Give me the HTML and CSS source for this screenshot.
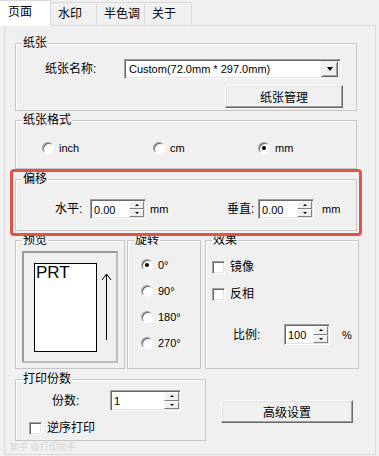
FILE: index.html
```html
<html>
<head>
  <meta charset="UTF-8">
  <link rel="stylesheet" href="styles.css">
</head>
<body>
<div class="dialog">
  <div class="tabs">
    <div class="tab active">页面</div>
    <div class="tab w46">水印</div>
    <div class="tab w48">半色调</div>
    <div class="tab w47">关于</div>
  </div>

  <div class="panel">
    <fieldset class="group paper">
      <legend>纸张</legend>
      <div class="row first">
        <span class="label name-label">纸张名称:</span>
        <div class="combo">
          <span class="combo-text">Custom(72.0mm * 297.0mm)</span>
          <span class="drop"><i class="tri-down"></i></span>
        </div>
      </div>
      <button class="btn manage">纸张管理</button>
    </fieldset>

    <fieldset class="group format">
      <legend>纸张格式</legend>
      <div class="row radios">
        <label class="opt w111"><span class="radio"></span>inch</label>
        <label class="opt w105"><span class="radio"></span>cm</label>
        <label class="opt"><span class="radio on"></span>mm</label>
      </div>
    </fieldset>

    <div class="mark-wrap">
      <fieldset class="group offset">
        <legend>偏移</legend>
        <div class="row">
          <span class="label h-label">水平:</span>
          <div class="spin w56">
            <span class="spin-text">0.00</span>
            <span class="spin-btns"><span class="sb"><i class="tri-up"></i></span><span class="sb"><i class="tri-dn"></i></span></span>
          </div>
          <span class="unit u1">mm</span>
          <span class="label v-label">垂直:</span>
          <div class="spin w56">
            <span class="spin-text">0.00</span>
            <span class="spin-btns"><span class="sb"><i class="tri-up"></i></span><span class="sb"><i class="tri-dn"></i></span></span>
          </div>
          <span class="unit u2">mm</span>
        </div>
      </fieldset>
      <div class="mark"></div>
    </div>

    <div class="trio">
      <fieldset class="group preview">
        <legend>预览</legend>
        <div class="sheet-well">
          <div class="sheet">PRT</div>
          <svg class="arrow" width="11" height="68" viewBox="0 0 11 68">
            <path d="M5.5 1 V67 M5.5 1 L1 7 M5.5 1 L10 7" stroke="#000" stroke-width="1" fill="none"/>
          </svg>
        </div>
      </fieldset>

      <fieldset class="group rotate">
        <legend>旋转</legend>
        <div class="stack">
          <label class="opt"><span class="radio on"></span>0°</label>
          <label class="opt"><span class="radio"></span>90°</label>
          <label class="opt"><span class="radio"></span>180°</label>
          <label class="opt"><span class="radio"></span>270°</label>
        </div>
      </fieldset>

      <fieldset class="group effect">
        <legend>效果</legend>
        <label class="opt chk-row"><span class="check"></span>镜像</label>
        <label class="opt chk-row second"><span class="check"></span>反相</label>
        <div class="row scale-row">
          <span class="label s-label">比例:</span>
          <div class="spin w46 tall">
            <span class="spin-text">100</span>
            <span class="spin-btns"><span class="sb"><i class="tri-up"></i></span><span class="sb"><i class="tri-dn"></i></span></span>
          </div>
          <span class="unit pct">%</span>
        </div>
      </fieldset>
    </div>

    <div class="bottom">
      <fieldset class="group copies">
        <legend>打印份数</legend>
        <div class="row copies-row">
          <span class="label c-label">份数:</span>
          <div class="spin w71 tall">
            <span class="spin-text">1</span>
            <span class="spin-btns"><span class="sb"><i class="tri-up"></i></span><span class="sb"><i class="tri-dn"></i></span></span>
          </div>
        </div>
        <label class="opt rev-row"><span class="check"></span>逆序打印</label>
      </fieldset>
      <button class="btn advanced">高级设置</button>
    </div>

    <div class="watermark">知乎 @打印助手</div>
  </div>
</div>
</body>
</html>
```

FILE: styles.css
```css
* {
    box-sizing: border-box;
    margin: 0;
    padding: 0;
}

body {
    width: 379px;
    height: 456px;
    overflow: hidden;
    background: #f0f0f0;
    color: #000;
    font-family: "Liberation Sans", "Noto Sans CJK SC", sans-serif;
    font-size: 12px;
    line-height: 16px;
}

/* tabs */
.tabs {
    display: flex;
    align-items: flex-end;
    height: 25px;
}

.tab {
    width: 47px;
    height: 23px;
    padding: 3px 0 0 7px;
    border: 1px solid #d9d9d9;
    border-bottom: 0;
    border-left: 0;
    background: #f0f0f0;
}

.tab.w46 { width: 46px; }
.tab.w48 { width: 48px; }
.tab.w47 { width: 47px; }

.tab.active {
    position: relative;
    z-index: 1;
    width: 51px;
    height: 26px;
    margin-bottom: -1px;
    padding: 3px 0 0 8px;
    background: #fff;
}

/* page panel */
.panel {
    width: 372px;
    height: 430px;
    margin-left: 4px;
    padding: 9px 0 0 10px;
    border: 1px solid #d9d9d9;
    background: #f0f0f0;
}

.group {
    width: 342px;
    padding: 0 6px;
    border: 1px solid #c6c6c6;
    box-shadow: inset 1px 1px 0 #fff;
}

.group legend {
    padding: 0 1px;
    line-height: 16px;
}

.row {
    display: flex;
    align-items: center;
}

.label {
    flex: none;
}

/* paper */
.paper {
    height: 76px;
}

.paper .first {
    margin: 8px 0 0 23px;
}

.name-label {
    width: 79px;
}

.combo {
    display: flex;
    justify-content: space-between;
    align-items: center;
    width: 217px;
    height: 20px;
    padding: 0 1px 0 3px;
    background: #fff;
    border: 1px solid;
    border-color: #a0a0a0 #fff #fff #a0a0a0;
    box-shadow: inset 1px 1px 0 #696969, inset -1px -1px 0 #e3e3e3;
    font-size: 11px;
}

.combo-text {
    padding-left: 1px;
}

.drop {
    display: flex;
    align-items: center;
    justify-content: center;
    width: 17px;
    height: 16px;
    margin-right: 1px;
    background: #f0f0f0;
    border: 1px solid;
    border-color: #e3e3e3 #696969 #696969 #e3e3e3;
    box-shadow: inset 1px 1px 0 #fff, inset -1px -1px 0 #a0a0a0;
}

.tri-down {
    border-left: 3px solid transparent;
    border-right: 3px solid transparent;
    border-top: 4px solid #000;
}

.btn {
    display: block;
    background: #f0f0f0;
    border: 1px solid;
    border-color: #fff #696969 #696969 #fff;
    box-shadow: inset -1px -1px 0 #a0a0a0, inset 1px 1px 0 #e3e3e3;
    font-family: "Liberation Sans", "Noto Sans CJK SC", sans-serif;
    font-size: 12px;
    color: #000;
}

.manage {
    width: 118px;
    height: 23px;
    margin: 6px 0 0 203px;
}

/* format */
.format {
    height: 57px;
    margin-top: 1px;
}

.radios {
    margin: 12px 0 0 20px;
    font-size: 11px;
}

.opt {
    display: flex;
    align-items: center;
    height: 16px;
    font-size: 11px;
}

.w111 { width: 111px; }
.w105 { width: 105px; }

.radio {
    position: relative;
    flex: none;
    width: 12px;
    height: 12px;
    margin-right: 5px;
    border-radius: 50%;
    background: #fff;
    border: 1px solid;
    border-color: #a0a0a0 #fff #fff #a0a0a0;
    box-shadow: inset 1px 1px 0 #696969;
}

.radio.on::after {
    content: "";
    position: absolute;
    left: 3px;
    top: 3px;
    width: 4px;
    height: 4px;
    border-radius: 50%;
    background: #000;
}

/* offset */
.mark-wrap {
    position: relative;
    margin-top: 2px;
}

.offset {
    height: 60px;
}

.offset .row {
    margin: 12px 0 0 33px;
}

.mark {
    position: absolute;
    left: -5px;
    top: -2px;
    width: 352px;
    height: 67px;
    border: 3px solid #df5349;
    border-radius: 4px;
}

.h-label { width: 35px; }
.v-label { width: 31px; }

.spin {
    display: flex;
    justify-content: space-between;
    height: 20px;
    padding: 1px;
    background: #fff;
    border: 1px solid;
    border-color: #a0a0a0 #fff #fff #a0a0a0;
    box-shadow: inset 1px 1px 0 #696969, inset -1px -1px 0 #e3e3e3;
    font-size: 11px;
}

.spin.tall { height: 21px; }
.w56 { width: 56px; }
.w46 { width: 46px; }
.w71 { width: 71px; }

.spin-text {
    padding: 1px 0 0 2px;
}

.spin-btns {
    display: flex;
    flex-direction: column;
    width: 15px;
}

.sb {
    display: flex;
    flex: 1;
    align-items: center;
    justify-content: center;
    background: #f0f0f0;
    border: 1px solid;
    border-color: #fff #808080 #808080 #fff;
}

.tri-up {
    border-left: 2px solid transparent;
    border-right: 2px solid transparent;
    border-bottom: 2px solid #000;
}

.tri-dn {
    border-left: 2px solid transparent;
    border-right: 2px solid transparent;
    border-top: 2px solid #000;
}

.unit {
    font-size: 11px;
}

.u1 {
    width: 81px;
    padding-left: 4px;
}

.u2 {
    padding-left: 8px;
}

/* preview / rotate / effect */
.trio {
    display: flex;
    height: 137px;
    margin-top: 1px;
}

.trio .group {
    height: 137px;
}

.preview {
    width: 109px !important;
}

.rotate {
    width: 74px !important;
    margin-left: 2px;
}

.effect {
    width: 145px !important;
    margin-left: 4px;
}

.sheet-well {
    display: flex;
    align-items: flex-start;
    width: 96px;
    height: 112px;
    margin-top: 3px;
    padding: 10px 0 0 10px;
    border: 2px solid;
    border-color: #9a9a9a #bdbdbd #bdbdbd #9a9a9a;
}

.sheet {
    width: 63px;
    height: 89px;
    padding: 0 0 0 1px;
    background: #fff;
    border: 1px solid #000;
    font-family: "Liberation Sans", sans-serif;
    font-size: 17px;
    line-height: 18px;
}

.arrow {
    margin: 10px 0 0 4px;
}

.stack {
    display: flex;
    flex-direction: column;
    gap: 10px;
    margin: 9px 0 0 7px;
}

.check {
    flex: none;
    width: 13px;
    height: 13px;
    margin-right: 5px;
    background: #fff;
    border: 1px solid;
    border-color: #a0a0a0 #fff #fff #a0a0a0;
    box-shadow: inset 1px 1px 0 #696969, inset -1px -1px 0 #e3e3e3;
}

.chk-row {
    margin-top: 11px;
    font-size: 12px;
}

.chk-row.second {
    margin-top: 11px;
}

.scale-row {
    margin: 22px 0 0 21px;
}

.s-label { width: 51px; }

.pct {
    padding-left: 12px;
}

/* copies */
.bottom {
    display: flex;
    align-items: flex-start;
    margin-top: 2px;
}

.copies {
    width: 191px !important;
    height: 70px;
}

.copies-row {
    margin: 3px 0 0 30px;
}

.c-label { width: 58px; }

.rev-row {
    margin: 9px 0 0 7px;
    font-size: 12px;
}

.advanced {
    width: 132px;
    height: 23px;
    margin: 29px 0 0 15px;
}

.watermark {
    margin: 1px 0 0 -5px;
    font-size: 9px;
    line-height: 11px;
    color: #d6d6d6;
}
```
